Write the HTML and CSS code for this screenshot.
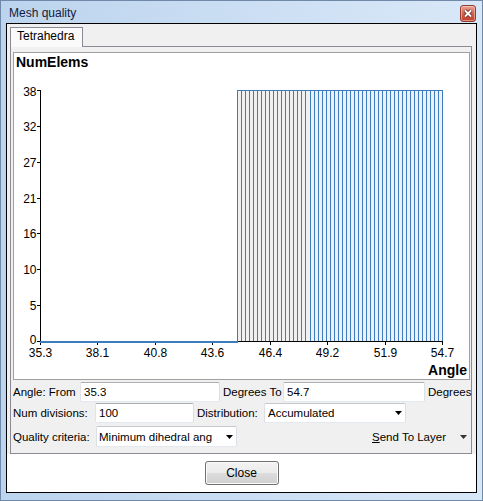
FILE: index.html
```html
<!DOCTYPE html>
<html>
<head>
<meta charset="utf-8">
<title>Mesh quality</title>
<link rel="stylesheet" href="styles.css">
</head>
<body>
<div class="window">
  <div class="titlebar">
    <span class="title">Mesh quality</span>
    <span class="close-x">
      <svg width="10" height="9" viewBox="0 0 10 9"><path d="M2 1.5L8 7.5M8 1.5L2 7.5" stroke="#6a2a20" stroke-width="3.6"/><path d="M2 1.5L8 7.5M8 1.5L2 7.5" stroke="#fff" stroke-width="1.8"/></svg>
    </span>
  </div>
  <div class="client">
    <div class="tabs"><div class="tab">Tetrahedra</div></div>
    <div class="panel">
      <div class="chart">
        <svg class="plot" width="455" height="326" viewBox="14 53 455 326">
          <text class="axis-title" x="16" y="67">NumElems</text>
          <rect x="237" y="90" width="206" height="251" fill="#f0f0f0"/>
          <path d="M40.5 90V342M40 341.5H443M37 90.5H40M37 126.5H40M37 162.5H40M37 198.5H40M37 233.5H40M37 269.5H40M37 305.5H40M37 341.5H40M40.5 342V345M97.5 342V345M155.5 342V345M212.5 342V345M270.5 342V345M327.5 342V345M385.5 342V345M442.5 342V345" stroke="#000" stroke-width="1" fill="none"/>
          <path class="bars" d="M237 90.5H443M237.5 90V341M241.5 90V341M245.5 90V341M249.5 90V341M253.5 90V341M257.5 90V341M261.5 90V341M265.5 90V341M269.5 90V341M273.5 90V341M277.5 90V341M281.5 90V341M285.5 90V341M289.5 90V341M293.5 90V341M297.5 90V341M301.5 90V341M305.5 90V341M310.5 90V341M314.5 90V341M318.5 90V341M322.5 90V341M326.5 90V341M330.5 90V341M334.5 90V341M338.5 90V341M342.5 90V341M346.5 90V341M350.5 90V341M354.5 90V341M358.5 90V341M362.5 90V341M366.5 90V341M370.5 90V341M374.5 90V341M378.5 90V341M382.5 90V341M386.5 90V341M390.5 90V341M394.5 90V341M398.5 90V341M402.5 90V341M406.5 90V341M410.5 90V341M414.5 90V341M418.5 90V341M422.5 90V341M426.5 90V341M430.5 90V341M434.5 90V341M438.5 90V341M442.5 90V341" stroke="#3b7dc0" stroke-width="1" fill="none"/>
          <rect x="40" y="341" width="198" height="2" fill="#3b7dc0"/>
          <g class="ylabels">
            <text x="36.5" y="95.5">38</text>
            <text x="36.5" y="131">32</text>
            <text x="36.5" y="167">27</text>
            <text x="36.5" y="203">21</text>
            <text x="36.5" y="238">16</text>
            <text x="36.5" y="274">10</text>
            <text x="36.5" y="309.5">5</text>
            <text x="36.5" y="343.5">0</text>
          </g>
          <g class="xlabels">
            <text x="40.5" y="356.5">35.3</text>
            <text x="97.5" y="356.5">38.1</text>
            <text x="155.5" y="356.5">40.8</text>
            <text x="212.5" y="356.5">43.6</text>
            <text x="270.5" y="356.5">46.4</text>
            <text x="327.5" y="356.5">49.2</text>
            <text x="385.5" y="356.5">51.9</text>
            <text x="442.5" y="356.5">54.7</text>
          </g>
          <text class="axis-title end" x="467" y="375">Angle</text>
        </svg>
      </div>
      <div class="row r1">
        <span class="lbl l-from">Angle: From</span>
        <span class="field f-from">35.3</span>
        <span class="lbl l-to">Degrees To</span>
        <span class="field f-to">54.7</span>
        <span class="lbl l-deg">Degrees</span>
      </div>
      <div class="row r2">
        <span class="lbl l-div">Num divisions:</span>
        <span class="field f-div">100</span>
        <span class="lbl l-dist">Distribution:</span>
        <span class="combo c-dist"><span class="combo-text">Accumulated</span><svg class="arrow" width="7" height="4" viewBox="0 0 7 4"><path d="M0 0H7L3.5 4Z" fill="#000"/></svg></span>
      </div>
      <div class="row r3">
        <span class="lbl l-crit">Quality criteria:</span>
        <span class="combo c-crit"><span class="combo-text clip">Minimum dihedral ang</span><svg class="arrow" width="7" height="4" viewBox="0 0 7 4"><path d="M0 0H7L3.5 4Z" fill="#000"/></svg></span>
        <span class="send"><u>S</u>end To Layer</span>
        <svg class="send-arrow" width="7" height="4" viewBox="0 0 7 4"><path d="M0 0H7L3.5 4Z" fill="#333"/></svg>
      </div>
    </div>
    <div class="footer">
      <button class="btn">Close</button>
    </div>
  </div>
</div>
</body>
</html>
```

FILE: styles.css
```css
* { box-sizing: border-box; }
html, body { margin: 0; padding: 0; }
body {
  width: 483px;
  height: 501px;
  overflow: hidden;
  font-family: "Liberation Sans", Arial, sans-serif;
  font-size: 12px;
  color: #000;
}
.window {
  width: 483px;
  height: 501px;
  border: 1px solid #7089a8;
  background: linear-gradient(to right, #bcd4ee, #d9e8f8);
  display: flex;
  flex-direction: column;
}
.titlebar {
  height: 22px;
  flex: none;
  display: flex;
  align-items: flex-start;
}
.title {
  padding: 3px 0 0 8px;
  line-height: 19px;
  color: #12203c;
}
.close-x {
  margin: 4px 6px 0 auto;
  width: 16px;
  height: 17px;
  border: 1px solid #8f3b30;
  border-radius: 3px;
  background: linear-gradient(#eaa595, #d0614f 50%, #c13e2b);
  box-shadow: inset 0 0 0 1px rgba(255, 220, 210, 0.5);
  display: flex;
  align-items: center;
  justify-content: center;
}
.close-x svg { display: block; }
.client {
  margin: 0 5px 7px;
  flex: 1;
  border: 1px solid #000;
  background: #f0f0f0;
  display: flex;
  flex-direction: column;
}
.tabs {
  display: flex;
  padding: 3px 0 0 3px;
  height: 23px;
  flex: none;
}
.tab {
  position: relative;
  z-index: 1;
  width: 73px;
  height: 20px;
  border: 1px solid #898c95;
  border-bottom: none;
  background: #fafafa;
  padding-left: 6px;
  line-height: 17px;
}
.panel {
  margin: -1px 4px 0 3px;
  border: 1px solid #898c95;
  padding: 5px 1px 6px 2px;
  background: #f0f0f0;
  flex: none;
}
.chart {
  height: 328px;
  border: 1px solid #a0a0a0;
  background: #fff;
}
.plot { display: block; }
.plot text {
  font-family: "Liberation Sans", Arial, sans-serif;
  font-size: 12px;
  fill: #000;
}
.plot .axis-title {
  font-size: 14px;
  font-weight: bold;
}
.plot .end { text-anchor: end; }
.ylabels text { text-anchor: end; }
.xlabels text { text-anchor: middle; }
.bars { shape-rendering: crispEdges; }

.row {
  display: flex;
  align-items: center;
  white-space: nowrap;
  font-size: 11.5px;
}
.r1 { height: 20px; margin-top: 2px; }
.r2 { height: 20px; margin-top: 1px; }
.r3 { height: 21px; margin-top: 3px; padding-right: 3px; }
.lbl { flex: none; }
.l-from { width: 67px; }
.l-to { width: 63px; padding-left: 3px; }
.l-deg { padding-left: 3px; }
.l-div { width: 82px; }
.l-dist { width: 70px; padding-left: 3px; }
.l-crit { width: 83px; }
.field {
  flex: none;
  height: 100%;
  border: 1px solid;
  border-color: #abadb3 #dbdfe6 #e3e9ef #e2e3ea;
  border-radius: 2px;
  background: #fff;
  padding: 0 3px;
  line-height: 18px;
}
.f-from { width: 140px; }
.f-to { width: 142px; }
.f-div { width: 99px; }
.combo {
  flex: none;
  height: 100%;
  display: flex;
  align-items: center;
  justify-content: space-between;
  border: 1px solid;
  border-color: #c5c8cf #dbdfe6 #e3e9ef #dbdfe6;
  border-radius: 2px;
  background: #fff;
  padding: 0 3px 0 3px;
}
.c-dist { width: 142px; }
.c-crit { width: 141px; padding-left: 2px; }
.combo-text { overflow: hidden; }
.clip { width: 119px; }
.arrow { display: block; flex: none; }
.send { margin-left: auto; margin-right: 14px; }
.send-arrow { display: block; flex: none; }
.footer {
  flex: 1;
  background: #fff;
  display: flex;
  align-items: center;
  justify-content: center;
}
.btn {
  width: 74px;
  height: 24px;
  border: 1px solid #707070;
  border-radius: 3px;
  background: linear-gradient(#f2f2f2 0, #ebebeb 50%, #dddddd 50%, #cfcfcf 100%);
  box-shadow: inset 0 0 0 1px #fbfbfb;
  font-family: "Liberation Sans", Arial, sans-serif;
  font-size: 12px;
  color: #000;
  padding: 0;
}
```
